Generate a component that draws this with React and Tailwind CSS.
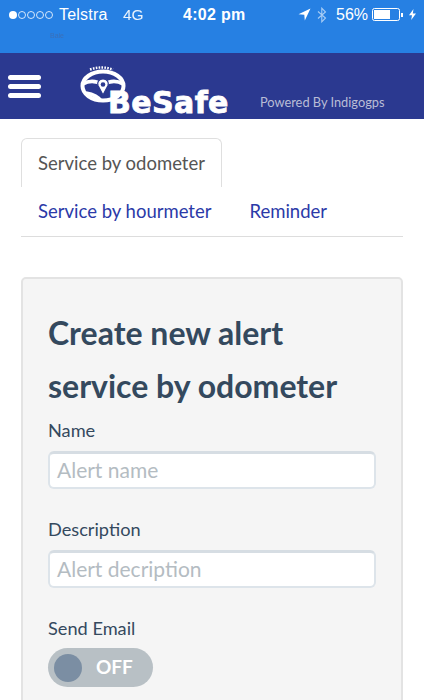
import React from "react";

const lato = { fontFamily: "Lato, sans-serif" };

function Wheel() {
  return (
    <svg width="62" height="50" viewBox="0 0 62 50" className="absolute left-0 top-0" fill="none" stroke="white">
      <ellipse cx="23" cy="26" rx="20.5" ry="14.5" strokeWidth="4" />
      <path d="M3 24 C10 20 16 20.5 23 25 C30 20.5 36 20 43 24" strokeWidth="3.6" />
      <path d="M6 33 C12 34 18 36 21 41" strokeWidth="3.6" />
      <path d="M23 19 C18.5 19 17 22.5 18 25.5 L23 35 L28 25.5 C29 22.5 27.5 19 23 19 Z" fill="white" stroke="#2b3990" strokeWidth="1.2" />
      <circle cx="23" cy="24.5" r="2.3" fill="#2b3990" stroke="none" />
      <path d="M10 9.5 Q22 5.5 33 9.5" strokeWidth="2.4" strokeDasharray="1.6 1.3" />
    </svg>
  );
}

function TextField({ label, placeholder, className = "" }) {
  return (
    <div className={className}>
      <div className="h-[25px] text-[18.2px] leading-[25px] text-[#34495e]">{label}</div>
      <div className="mt-[8px] flex h-[38px] w-[328px] items-center rounded-[6px] border-2 border-[#dde4ea] border-t-[3px] border-t-[#d6dde3] bg-white pb-[2px] pl-[7px] text-[21px] text-[#b4bcc2]">
        {placeholder}
      </div>
    </div>
  );
}

export default function App() {
  return (
    <div className="h-[700px] w-[424px] overflow-hidden bg-white" style={lato}>
      <div className="relative h-[53px] bg-[#2680e3] text-white" style={{ fontFamily: '"Liberation Sans", sans-serif' }}>
        <div className="flex h-[28px] items-center pl-[9px] pt-[1px] text-[16px]">
          <div className="flex items-center gap-[1px]">
            <span className="h-[8px] w-[8px] rounded-full bg-white" />
            {[0, 1, 2, 3].map((i) => (
              <span key={i} className="h-[8px] w-[8px] rounded-full border border-white/80" />
            ))}
          </div>
          <span className="ml-[6px] w-[64px] tracking-[0.2px]">Telstra</span>
          <span className="w-[60px] text-[15.5px] opacity-90">4G</span>
          <span className="w-[63px] font-bold tracking-[0.3px]">4:02 pm</span>
          <svg width="13" height="13" viewBox="0 0 13 13" className="ml-[52px]">
            <path d="M12.5 .5 L.5 6.2 L6.3 6.7 L6.8 12.5 Z" fill="white" />
          </svg>
          <svg width="10" height="16" viewBox="0 0 10 16" fill="none" stroke="#a9cdf5" strokeWidth="1.1" className="ml-[6px]">
            <path d="M1 4.5 L8.5 11 L4.8 14.8 V1.2 L8.5 5 L1 11.5" />
          </svg>
          <span className="ml-[9px]">56%</span>
          <div className="ml-[4px] flex items-center">
            <div className="h-[13px] w-[28px] rounded-[2.5px] border border-white p-[1px]">
              <div className="h-full w-[16px] bg-white" />
            </div>
            <span className="ml-[1px] h-[4px] w-[1.5px] bg-white" />
          </div>
          <svg width="7" height="11" viewBox="0 0 7 11" className="ml-[6px]">
            <path d="M4.5 0 L0 6.3 H3 L2.2 11 L7 4.5 H3.8 Z" fill="white" />
          </svg>
        </div>
        <span className="absolute left-[50px] top-[31px] text-[7px] text-[#3a6fb8] blur-[0.5px]">Bale</span>
      </div>

      <div className="flex h-[66px] items-end bg-[#2b3990]">
        <div className="mb-[21px] ml-[8px] flex w-[33px] flex-col gap-[4px]">
          <span className="h-[5px] rounded-full bg-white" />
          <span className="h-[5px] rounded-full bg-white" />
          <span className="h-[5px] rounded-full bg-white" />
        </div>
        <div className="relative ml-[39px] h-[59px] w-[148px]">
          <Wheel />
          <span
            className="absolute bottom-[-2px] left-[28px] text-[30px] leading-[36px] font-bold tracking-[0.4px] text-white"
            style={{ fontFamily: '"DejaVu Sans", sans-serif', WebkitTextStroke: "0.8px white" }}
          >
            BeSafe
          </span>
        </div>
        <span className="mb-[8px] ml-[32px] text-[12.8px] leading-[18px] text-[#b9bdd6]">Powered By Indigogps</span>
      </div>

      <div className="px-[21px] pt-[19px]">
        <div className="h-[49px] w-[201px] rounded-t-[6px] border-x border-t border-[#dfdfdf] pl-[16px] pt-[12px] text-[18.5px] leading-[25px] text-[#555555]">
          Service by odometer
        </div>
        <div className="flex h-[50px] items-center border-b border-[#dddddd] pt-[1px] pl-[17px] text-[18.5px] text-[#2b3aa8]">
          <span>Service by hourmeter</span>
          <span className="ml-[38px]">Reminder</span>
        </div>

        <div className="mt-[40px] h-[500px] rounded-[5px] border-2 border-[#e3e3e3] bg-[#f5f5f5] pl-[25px] pt-[27px]">
          <h1 className="text-[32px] leading-[53px] font-bold text-[#34495e]">
            Create new alert
            <br />
            service by odometer
          </h1>
          <TextField label="Name" placeholder="Alert name" className="mt-[6px]" />
          <TextField label="Description" placeholder="Alert decription" className="mt-[28px]" />
          <div className="mt-[28px] h-[25px] text-[18.2px] leading-[25px] text-[#34495e]">Send Email</div>
          <div className="mt-[7px] flex h-[39px] w-[105px] items-center rounded-full bg-[#b8c0c5] pl-[6px]">
            <span className="h-[28px] w-[28px] rounded-full bg-[#7b8ea3]" />
            <span className="ml-[14px] text-[19px] font-bold text-white">OFF</span>
          </div>
        </div>
      </div>
    </div>
  );
}
